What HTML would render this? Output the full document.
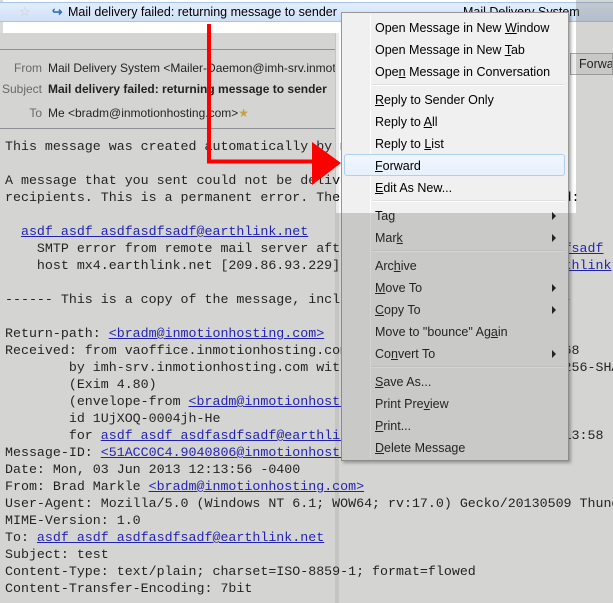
<!DOCTYPE html>
<html><head><meta charset="utf-8"><style>
*{margin:0;padding:0;box-sizing:border-box}
body{width:613px;height:603px;overflow:hidden;background:#fff;position:relative;font-family:"Liberation Sans",sans-serif;color:#000}
.abs{position:absolute}
.tabrow{left:0;top:2px;width:613px;height:20px;background:linear-gradient(#e4eefc,#cfe0f7);border-top:1px solid #a9c4ea;border-bottom:1px solid #a9c4ea;font-size:12.5px;line-height:18px}
.hdr{left:0;top:49px;width:336px;height:80px;border-top:1px solid #9aa0a8;border-bottom:1px solid #9aa0a8;font-size:12px;overflow:hidden}
.hdr div{position:absolute;white-space:nowrap}
.lbl{color:#666;text-align:right;width:42px;left:0}
.bodywrap{position:absolute;left:0;top:130px;width:613px;height:473px;overflow:hidden}
pre{position:absolute;left:5px;top:8px;font-family:"Liberation Mono",monospace;font-size:13.3px;line-height:17px;color:#000;white-space:pre}
a{color:#0000d0;text-decoration:underline}
.menu{left:341px;top:12px;width:228px;height:449px;background:#f0f0f0;border:1px solid #979797;box-shadow:2px 2px 3px rgba(0,0,0,.35);font-size:12.5px}
.menu .gut{position:absolute;left:28px;top:2px;bottom:2px;width:1px;background:#e2e3e3;border-right:1px solid #fff}
.it{position:absolute;left:33px;height:22px;line-height:22px;white-space:nowrap}
.sep{position:absolute;left:30px;right:3px;height:2px;border-top:1px solid #e0e0e0;border-bottom:1px solid #fff}
.sub{position:absolute;right:12px;width:0;height:0;border-left:4px solid #000;border-top:4px solid transparent;border-bottom:4px solid transparent}
.hl{position:absolute;left:2px;right:3px;top:141px;height:22px;border:1px solid #aecff7;border-radius:3px;background:linear-gradient(#f2f7fe,#e6effc)}
.dim{position:absolute;background:rgba(112,114,106,0.3)}
</style></head><body>
<div class="abs" style="left:0;top:0;width:3px;height:33px;background:#d8dadc"></div>
<div class="abs tabrow">
 <span class="abs" style="left:19px;top:0;color:#c4ccd6;font-size:13px">☆</span>
 <span class="abs" style="left:52px;top:0;color:#2f6fc9;font-weight:bold">↪</span>
 <span class="abs" style="left:68px;top:0">Mail delivery failed: returning message to sender</span>
 <span class="abs" style="left:463px;top:0">Mail Delivery System</span>
</div>
<div class="abs" style="left:0;top:33px;width:613px;height:570px;background:#fff"></div>
<div class="abs hdr">
 <div class="lbl" style="top:11px">From</div><div style="left:48px;top:11px">Mail Delivery System &lt;Mailer-Daemon@imh-srv.inmotionhosting.com&gt;</div>
 <div class="lbl" style="top:32px">Subject</div><div style="left:48px;top:32px;font-weight:bold">Mail delivery failed: returning message to sender</div>
 <div class="lbl" style="top:56px">To</div><div style="left:48px;top:56px">Me &lt;bradm@inmotionhosting.com&gt;<span style="color:#e8b830">★</span></div>
</div>
<div class="abs" style="left:570px;top:53px;width:43px;height:22px;border:1px solid #aaa;background:#eee;font-size:12.5px;line-height:20px;padding-left:8px;overflow:hidden;white-space:nowrap">Forward</div>
<div class="abs" style="left:335px;top:33px;width:4px;height:570px;background:#eaeaea"></div>
<div class="bodywrap"><pre>This message was created automatically by mail delivery software.

A message that you sent could not be delivered to one or more of its
recipients. This is a permanent error. The following address(es) failed:

  <a>asdf asdf asdfasdfsadf@earthlink.net</a>
    SMTP error from remote mail server after RCPT TO:<a>asdf asdf asdfasdfsadf</a>
    host mx4.earthlink.net [209.86.93.229]: <a>asdf asdf asdfasdfsadf@earthlink</a>

------ This is a copy of the message, including all the headers. ------

Return-path: <a>&lt;bradm@inmotionhosting.com&gt;</a>
Received: from vaoffice.inmotionhosting.com ([192.168.1.1] helo=[192.168
        by imh-srv.inmotionhosting.com with esmtpsa (TLSv1:DHE-RSA-AES256-SHA
        (Exim 4.80)
        (envelope-from <a>&lt;bradm@inmotionhosting.com&gt;</a>)
        id 1UjXOQ-0004jh-He
        for <a>asdf asdf asdfasdfsadf@earthlink.net</a>; Mon, 03 Jun 2013 12:13:58
Message-ID: <a>&lt;51ACC0C4.9040806@inmotionhosting.com&gt;</a>
Date: Mon, 03 Jun 2013 12:13:56 -0400
From: Brad Markle <a>&lt;bradm@inmotionhosting.com&gt;</a>
User-Agent: Mozilla/5.0 (Windows NT 6.1; WOW64; rv:17.0) Gecko/20130509 Thunderbird
MIME-Version: 1.0
To: <a>asdf asdf asdfasdfsadf@earthlink.net</a>
Subject: test
Content-Type: text/plain; charset=ISO-8859-1; format=flowed
Content-Transfer-Encoding: 7bit</pre></div>
<div class="abs menu">
 <div class="gut"></div>
 <div class="hl"></div>
 <div class="it" style="top:4px">Open Message in New <u>W</u>indow</div>
 <div class="it" style="top:26px">Open Message in New <u>T</u>ab</div>
 <div class="it" style="top:48px">Ope<u>n</u> Message in Conversation</div>
 <div class="sep" style="top:71px"></div>
 <div class="it" style="top:76px"><u>R</u>eply to Sender Only</div>
 <div class="it" style="top:98px">Reply to <u>A</u>ll</div>
 <div class="it" style="top:120px">Reply to <u>L</u>ist</div>
 <div class="it" style="top:142px"><u>F</u>orward</div>
 <div class="it" style="top:164px"><u>E</u>dit As New...</div>
 <div class="sep" style="top:187px"></div>
 <div class="it" style="top:192px">Ta<u>g</u></div><div class="sub" style="top:199px"></div>
 <div class="it" style="top:214px">Mar<u>k</u></div><div class="sub" style="top:221px"></div>
 <div class="sep" style="top:237px"></div>
 <div class="it" style="top:242px">Arc<u>h</u>ive</div>
 <div class="it" style="top:264px"><u>M</u>ove To</div><div class="sub" style="top:271px"></div>
 <div class="it" style="top:286px"><u>C</u>opy To</div><div class="sub" style="top:293px"></div>
 <div class="it" style="top:308px">Move to "bounce" Ag<u>a</u>in</div>
 <div class="it" style="top:330px">Co<u>n</u>vert To</div><div class="sub" style="top:337px"></div>
 <div class="sep" style="top:353px"></div>
 <div class="it" style="top:358px"><u>S</u>ave As...</div>
 <div class="it" style="top:380px">Print Pre<u>v</u>iew</div>
 <div class="it" style="top:402px"><u>P</u>rint...</div>
 <div class="it" style="top:424px"><u>D</u>elete Message</div>
</div>
<div class="dim" style="left:0;top:33px;width:336px;height:570px"></div>
<div class="dim" style="left:336px;top:213px;width:240px;height:390px"></div>
<div class="dim" style="left:576px;top:0;width:37px;height:603px"></div>
<svg class="abs" style="left:0;top:0" width="613" height="603">
 <path d="M209 24 V161.5 H314" fill="none" stroke="#f00" stroke-width="4"/>
 <polygon points="312,142 341,163 312,185" fill="#f00"/>
</svg>
</body></html>
